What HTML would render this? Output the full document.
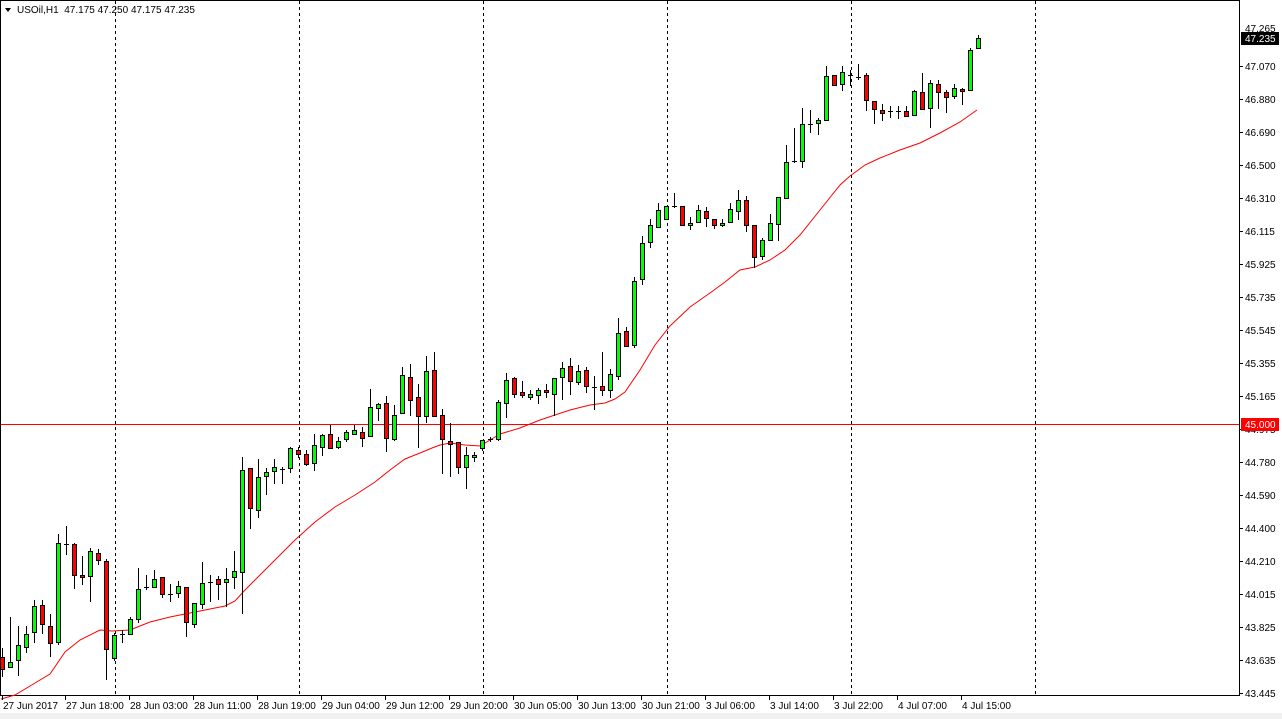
<!DOCTYPE html>
<html><head><meta charset="utf-8"><style>
html,body{margin:0;padding:0;background:#fff;width:1282px;height:719px;overflow:hidden}
svg{display:block}
text{font-family:"Liberation Sans",sans-serif;font-size:10px}
</style></head><body>
<svg id="c" width="1282" height="719" xmlns="http://www.w3.org/2000/svg">
<rect x="0" y="0" width="1282" height="719" fill="#fff"/>
<rect x="0" y="713" width="1282" height="6" fill="#f0f0f0"/>
<line x1="0.5" y1="0" x2="0.5" y2="696" stroke="#000"/>
<line x1="0" y1="0.5" x2="1240" y2="0.5" stroke="#000"/>
<line x1="1239.5" y1="0" x2="1239.5" y2="696" stroke="#000"/>
<line x1="0" y1="695.5" x2="1240" y2="695.5" stroke="#000"/>
<g id="grid" stroke="#000" stroke-dasharray="3,3"></g>
<line x1="1" y1="424.5" x2="1239" y2="424.5" stroke="#ff0000"/>
<polyline id="ma" fill="none" stroke="#ff0000" stroke-width="1"></polyline>
<g id="candles"></g>
<g id="axis"></g>
<path d="M5 8 L11 8 L8 12 Z" fill="#000"/>
<text x="17" y="13" fill="#000" style="font-size:10px">USOil,H1&#160; 47.175 47.250 47.175 47.235</text>
</svg>
<script>
var NS="http://www.w3.org/2000/svg";
function el(p,t,a,txt){var e=document.createElementNS(NS,t);for(var k in a)e.setAttribute(k,a[k]);if(txt!=null)e.textContent=txt;document.getElementById(p).appendChild(e);return e;}
[115,299,483,667,851,1035].forEach(function(x){el("grid","line",{x1:x+0.5,y1:1,x2:x+0.5,y2:695});});
var D=[
[657,669,648,676,'r'],[662,667,617,667,'g'],[645,660,626,675,'g'],[634,647,626,652,'g'],[606,632,600,642,'g'],
[605,624,600,633,'r'],[626,643,614,656,'r'],[543,642,534,644,'g'],[544,544,526,554,'d'],[544,575,543,588,'r'],
[575,577,556,584,'r'],[551,576,548,601,'g'],[553,560,549,564,'r'],[561,649,559,679,'r'],[635,658,633,660,'g'],
[634,634,630,642,'d'],[619,634,617,634,'g'],[589,619,568,622,'g'],[587,587,575,589,'d'],[579,587,570,587,'g'],
[577,594,577,597,'r'],[594,594,584,601,'d'],[586,593,581,597,'g'],[587,622,587,636,'r'],[603,624,603,627,'g'],
[583,604,562,608,'g'],[582,582,575,601,'d'],[579,584,576,599,'r'],[579,582,568,606,'g'],[571,577,551,588,'g'],
[470,572,457,613,'g'],[468,508,468,528,'r'],[477,510,459,517,'g'],[472,476,468,494,'g'],[467,471,459,483,'g'],
[469,469,467,483,'d'],[448,468,447,472,'g'],[450,454,447,457,'r'],[454,464,450,465,'r'],[445,463,434,470,'g'],
[435,447,434,455,'g'],[434,448,425,448,'r'],[441,447,437,448,'g'],[432,439,430,441,'g'],[430,434,425,434,'g'],
[432,438,427,446,'r'],[407,436,389,436,'g'],[404,408,403,420,'g'],[403,438,396,451,'r'],[415,439,405,440,'g'],
[375,413,367,413,'g'],[377,400,364,415,'r'],[397,416,384,447,'r'],[371,416,356,422,'g'],[370,416,352,416,'r'],
[415,439,409,473,'r'],[441,444,423,476,'r'],[442,467,442,473,'r'],[455,467,447,488,'g'],[455,457,452,461,'g'],
[440,448,440,450,'g'],[439,439,437,441,'d'],[402,439,400,440,'g'],[380,403,373,417,'g'],[378,394,377,397,'r'],
[392,395,381,397,'r'],[394,397,390,399,'g'],[390,395,388,403,'g'],[390,392,384,397,'r'],[378,394,378,415,'g'],
[368,377,362,399,'g'],[366,381,358,394,'r'],[371,382,365,384,'g'],[370,386,367,392,'r'],[387,387,376,409,'d'],
[386,390,352,395,'r'],[374,390,369,397,'g'],[333,376,318,379,'g'],[331,346,327,346,'r'],[281,345,277,347,'g'],
[243,279,236,284,'g'],[225,242,219,247,'g'],[210,227,203,227,'g'],[206,219,206,219,'g'],[206,206,193,207,'d'],
[206,225,206,225,'r'],[223,225,217,229,'g'],[210,222,205,222,'g'],[211,218,207,226,'r'],[219,225,219,228,'r'],
[223,225,219,226,'g'],[209,222,203,222,'g'],[200,211,190,219,'g'],[200,225,196,231,'r'],[225,257,225,267,'r'],
[240,256,238,259,'g'],[223,240,214,240,'g'],[197,224,197,240,'g'],[162,198,145,198,'g'],[161,161,128,162,'d'],
[124,161,108,167,'g'],[124,124,110,132,'d'],[120,123,118,134,'g'],[76,120,66,120,'g'],[75,85,75,85,'r'],
[72,84,66,90,'g'],[75,75,70,85,'d'],[77,77,64,79,'d'],[75,100,73,110,'r'],[101,109,101,123,'r'],
[110,113,104,120,'r'],[111,111,106,117,'d'],[111,111,106,118,'d'],[111,116,106,116,'r'],[91,115,90,115,'g'],
[92,109,73,109,'r'],[83,108,80,127,'g'],[84,92,80,108,'r'],[92,97,90,112,'r'],[88,96,84,98,'g'],
[89,91,88,104,'r'],[50,90,48,90,'g'],[38,48,35,48,'g']
];
D.forEach(function(c,k){
  var cx=8*k+2.5;
  el("candles","line",{x1:cx,y1:c[2],x2:cx,y2:c[3]+1,stroke:"#000"});
  if(c[4]=='d'){el("candles","line",{x1:cx-2.5,y1:c[0]+0.5,x2:cx+2.5,y2:c[0]+0.5,stroke:"#000"});}
  else{var h=Math.max(c[1]-c[0],1);el("candles","rect",{x:cx-2,y:c[0]+0.5,width:4,height:h,fill:c[4]=='g'?"#00ff00":"#ff0000",stroke:"#000"});}
});
var M=[[1,699],[15,695],[35,683],[50,674],[65,652],[80,640],[100,630],[112,631],[130,630],[150,622],[170,617],[185,614],[200,611],[225,606],[235,601],[245,590],[255,580],[275,560],[295,540],[315,522],[335,507],[355,495],[375,482],[390,470],[405,459],[420,453],[432,448],[440,445],[450,443],[465,445],[480,446],[490,440],[500,434],[520,428],[540,420],[555,415],[570,410],[590,405],[605,403],[615,399],[625,392],[640,370],[655,345],[670,326],[690,307],[710,293],[725,282],[740,270],[755,267],[770,260],[785,250],[800,235],[820,210],[840,185],[850,176],[865,165],[880,158],[900,150],[920,143],[940,133],[960,122],[977,110]];
document.getElementById("ma").setAttribute("points",M.map(function(p){return p.join(",")}).join(" "));
var P=["47.070","46.880","46.690","46.500","46.310","46.115","45.925","45.735","45.545","45.355","45.165","44.975","44.780","44.590","44.400","44.210","44.015","43.825","43.635","43.445"];
P.forEach(function(p,i){var y=66+33*i;el("axis","line",{x1:1240,y1:y+0.5,x2:1243,y2:y+0.5,stroke:"#000"});el("axis","text",{x:1245,y:y+4,fill:"#000"},p);});
el("axis","text",{x:1245,y:32,fill:"#000"},"47.265");
el("axis","rect",{x:1241,y:32,width:38,height:13,fill:"#000"});
el("axis","text",{x:1245,y:42,fill:"#fff"},"47.235");
el("axis","rect",{x:1241,y:418,width:38,height:13,fill:"#ff0000"});
el("axis","text",{x:1245,y:428,fill:"#fff"},"45.000");
var T=[[2,"27 Jun 2017"],[65,"27 Jun 18:00"],[129,"28 Jun 03:00"],[193,"28 Jun 11:00"],[257,"28 Jun 19:00"],[321,"29 Jun 04:00"],[385,"29 Jun 12:00"],[449,"29 Jun 20:00"],[513,"30 Jun 05:00"],[577,"30 Jun 13:00"],[641,"30 Jun 21:00"],[705,"3 Jul 06:00"],[769,"3 Jul 14:00"],[833,"3 Jul 22:00"],[897,"4 Jul 07:00"],[961,"4 Jul 15:00"]];
T.forEach(function(t){el("axis","line",{x1:t[0]+0.5,y1:696,x2:t[0]+0.5,y2:700,stroke:"#000"});el("axis","text",{x:t[0]+1,y:709,fill:"#000"},t[1]);});
</script>
</body></html>
